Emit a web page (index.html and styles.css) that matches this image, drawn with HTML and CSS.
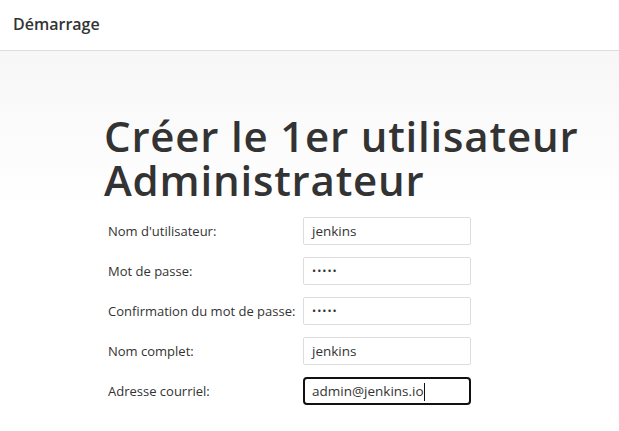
FILE: index.html
```html
<!DOCTYPE html>
<html lang="fr">
<head>
<meta charset="utf-8">
<link rel="stylesheet" href="styles.css">
</head>
<body>
<header class="topbar">Démarrage</header>
<main class="content">
  <h1 class="title">Créer le 1er utilisateur Administrateur</h1>
  <form class="form">
    <label class="label">Nom d'utilisateur:</label>
    <div class="field">jenkins</div>
    <label class="label">Mot de passe:</label>
    <div class="field dots">•••••</div>
    <label class="label">Confirmation du mot de passe:</label>
    <div class="field dots">•••••</div>
    <label class="label">Nom complet:</label>
    <div class="field">jenkins</div>
    <label class="label">Adresse courriel:</label>
    <div class="field focus">admin@jenkins.io<span class="caret"></span></div>
  </form>
</main>
</body>
</html>
```
FILE: styles.css
```css
html, body {
  margin: 0;
  padding: 0;
  height: 100%;
}
body {
  font-family: "Open Sans", "Noto Sans", sans-serif;
  color: #333;
  background: #fff;
  overflow: hidden;
}
.topbar {
  height: 51px;
  box-sizing: border-box;
  border-bottom: 1px solid #ddd;
  padding: 14px 0 0 13px;
  font-size: 16px;
  font-weight: 600;
  color: #333;
  line-height: 20px;
}
.content {
  background: linear-gradient(#f7f7f7, #fff 160px);
  height: calc(100% - 51px);
  padding: 63px 0 0 104px;
  box-sizing: border-box;
}
.title {
  margin: 0 0 15px 0;
  font-size: 42px;
  font-weight: 600;
  line-height: 44px;
  letter-spacing: 0.8px;
  color: #333;
  width: 515px;
}
.form {
  display: grid;
  grid-template-columns: 195px 168px;
  row-gap: 12px;
  padding-left: 4px;
  align-items: center;
}
.label {
  font-size: 13px;
  color: #333;
}
.field {
  height: 28px;
  box-sizing: border-box;
  border: 1px solid #ddd;
  border-radius: 2px;
  background: #fff;
  font-size: 13.5px;
  line-height: 26px;
  padding: 0 8px;
  color: #333;
}
.dots {
  letter-spacing: 1px;
  font-size: 11px;
}
.focus {
  border: 2px solid #111;
  border-radius: 4px;
  line-height: 24px;
  padding: 0 7px;
}
.caret {
  display: inline-block;
  width: 1px;
  height: 18px;
  background: #111;
  vertical-align: middle;
}
```
